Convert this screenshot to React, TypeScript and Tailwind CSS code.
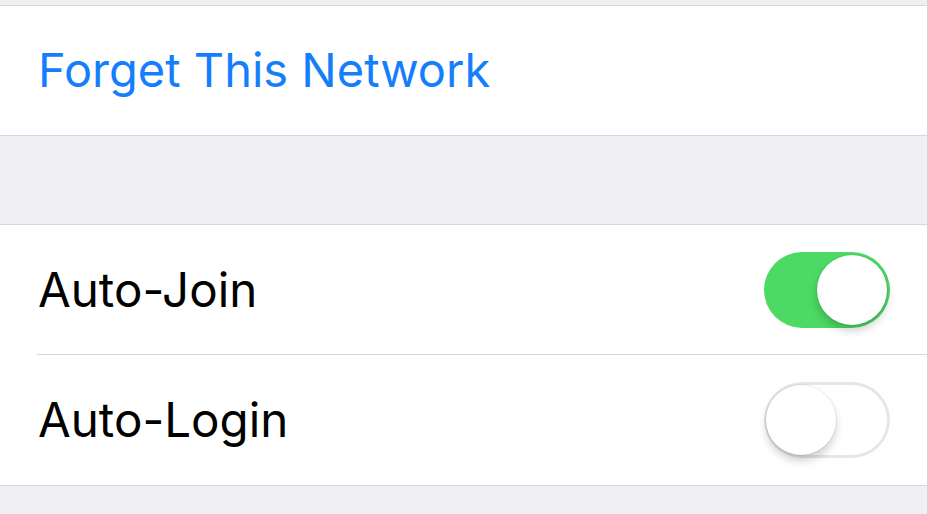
import { useState } from 'react';

function Toggle({ on, onChange }: { on: boolean; onChange: () => void }) {
    return (
        <button
            onClick={onChange}
            className={`relative w-[126px] h-[76px] rounded-full shrink-0 transition-colors ${
                on ? 'bg-[#4cd964]' : 'bg-white shadow-[inset_0_0_0_3px_#e6e6e6]'
            }`}
        >
            <span
                className={`absolute top-[3px] w-[70px] h-[70px] rounded-full bg-white shadow-[0_6px_8px_rgba(0,0,0,0.18),0_0_0_1px_rgba(0,0,0,0.06)] ${
                    on ? 'left-[53px]' : 'left-[2px]'
                }`}
            />
        </button>
    );
}

export default function App() {
    const [autoJoin, setAutoJoin] = useState(true);
    const [autoLogin, setAutoLogin] = useState(false);

    return (
        <div className="w-[928px] h-[514px] overflow-hidden bg-[#efeff4] border-r border-[#d4d4d8] font-['Inter','Liberation_Sans',sans-serif]">
            <div className="h-[5px]" />

            {/* Forget network */}
            <div className="bg-white border-y border-[#d8d8dc] h-[131px] flex items-center pl-[38px]">
                <span className="text-[#157efb] text-[47px]">Forget This Network</span>
            </div>

            <div className="h-[88px]" />

            {/* Toggles */}
            <div className="bg-white border-y border-[#d8d8dc]">
                <div className="h-[129px] flex items-center justify-between pl-[38px] pr-[37px]">
                    <span className="text-black text-[47.5px]">Auto-Join</span>
                    <Toggle on={autoJoin} onChange={() => setAutoJoin(v => !v)} />
                </div>
                <div className="ml-[37px] h-px bg-[#d8d8dc]" />
                <div className="h-[130px] flex items-center justify-between pl-[38px] pr-[37px]">
                    <span className="text-black text-[47.5px]">Auto-Login</span>
                    <Toggle on={autoLogin} onChange={() => setAutoLogin(v => !v)} />
                </div>
            </div>
        </div>
    );
}
